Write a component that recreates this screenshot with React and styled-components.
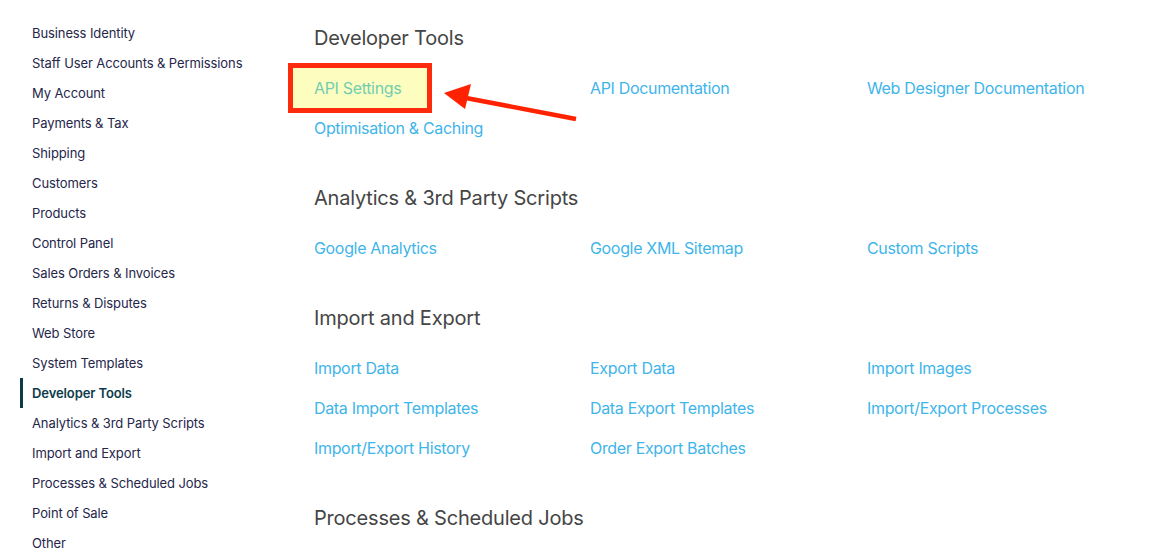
import React from 'react'
import styled, { createGlobalStyle } from 'styled-components'

const Global = createGlobalStyle`
  body {
    margin: 0;
    background: #fff;
    font-family: Inter, "Noto Sans", sans-serif;
  }
`

const menu = [
  'Business Identity',
  'Staff User Accounts & Permissions',
  'My Account',
  'Payments & Tax',
  'Shipping',
  'Customers',
  'Products',
  'Control Panel',
  'Sales Orders & Invoices',
  'Returns & Disputes',
  'Web Store',
  'System Templates',
  'Developer Tools',
  'Analytics & 3rd Party Scripts',
  'Import and Export',
  'Processes & Scheduled Jobs',
  'Point of Sale',
  'Other',
]

const sections = [
  {
    title: 'Developer Tools',
    links: ['API Settings', 'API Documentation', 'Web Designer Documentation', 'Optimisation & Caching'],
  },
  {
    title: 'Analytics & 3rd Party Scripts',
    links: ['Google Analytics', 'Google XML Sitemap', 'Custom Scripts'],
  },
  {
    title: 'Import and Export',
    links: [
      'Import Data', 'Export Data', 'Import Images',
      'Data Import Templates', 'Data Export Templates', 'Import/Export Processes',
      'Import/Export History', 'Order Export Batches',
    ],
  },
  { title: 'Processes & Scheduled Jobs', links: [] },
]

const App = () => {
  return (
    <Page>
      <Global />
      <Sidebar>
        {menu.map((m) => (
          <MenuItem key={m} active={m === 'Developer Tools'}>{m}</MenuItem>
        ))}
      </Sidebar>
      <Main>
        {sections.map((s) => (
          <Section key={s.title}>
            <Heading>{s.title}</Heading>
            {s.links.length > 0 && (
              <LinkGrid>
                {s.links.map((l) => (
                  <LinkCell key={l}>
                    {l === 'API Settings' && <Highlight />}
                    <Link marked={l === 'API Settings'}>{l}</Link>
                  </LinkCell>
                ))}
              </LinkGrid>
            )}
          </Section>
        ))}
      </Main>
      <Arrow width="140" height="45" viewBox="0 0 140 45">
        <line x1="26" y1="20" x2="136" y2="41" stroke="#ff2200" strokeWidth="4.5" strokeLinecap="butt" />
        <polygon points="4,15 31,6 25,31" fill="#ff2200" />
      </Arrow>
    </Page>
  )
}

export default App

const Page = styled.div`
  position: relative;
  display: flex;
  width: 1163px;
  height: 556px;
  overflow: hidden;
`

const Sidebar = styled.nav`
  width: 290px;
  flex-shrink: 0;
  padding-top: 18px;
  display: flex;
  flex-direction: column;
`

const MenuItem = styled.div`
  height: 30px;
  line-height: 30px;
  padding-left: ${(p) => (p.active ? '9px' : '12px')};
  margin-left: 20px;
  font-size: 13px;
  letter-spacing: -0.1px;
  font-weight: ${(p) => (p.active ? 600 : 400)};
  color: ${(p) => (p.active ? '#0d3b4c' : '#25264a')};
  border-left: ${(p) => (p.active ? '3px solid #0d3b4c' : 'none')};
  white-space: nowrap;
`

const Main = styled.main`
  flex: 1;
  padding-left: 24px;
  padding-top: 24px;
  display: flex;
  flex-direction: column;
  gap: 36px;
`

const Section = styled.section`
  display: flex;
  flex-direction: column;
  gap: 16px;
`

const Heading = styled.h2`
  margin: 0;
  font-size: 20px;
  line-height: 28px;
  font-weight: 400;
  letter-spacing: -0.2px;
  color: #454545;
`

const LinkGrid = styled.div`
  display: grid;
  grid-template-columns: 276px 277px 260px;
  grid-auto-rows: 40px;
`

const LinkCell = styled.div`
  position: relative;
  display: flex;
  align-items: center;
`

const Link = styled.a`
  position: relative;
  font-size: 16px;
  letter-spacing: -0.33px;
  color: ${(p) => (p.marked ? '#72cdb2' : '#3fb5ea')};
  text-decoration: none;
  white-space: nowrap;
  cursor: pointer;
`

const Highlight = styled.div`
  position: absolute;
  left: -26px;
  top: -5px;
  width: 144px;
  height: 50px;
  box-sizing: border-box;
  border: 5px solid #fe2a0c;
  background: #fdfdc0;
`

const Arrow = styled.svg`
  position: absolute;
  left: 440px;
  top: 78px;
`
